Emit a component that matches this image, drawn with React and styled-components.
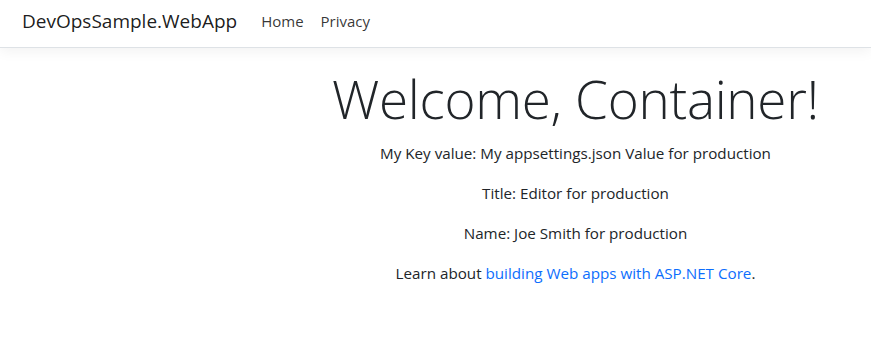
import React from "react";
import styled, { createGlobalStyle } from "styled-components";

const Global = createGlobalStyle`
  html, body { margin: 0; padding: 0; background: #fff; }
  body {
    font-family: "Open Sans", "Noto Sans", sans-serif;
    font-size: 15.2px;
    line-height: 24px;
    color: #212529;
  }
`;

const Navbar = styled.header`
  height: 48px;
  box-sizing: border-box;
  background: #fff;
  border-bottom: 1px solid #dee2e6;
  box-shadow: 0 4px 12px rgba(0, 0, 0, 0.05);
  display: flex;
  align-items: center;
  padding: 0 0 6px 22px;
`;

const Brand = styled.a`
  font-size: 19px;
  color: rgba(0, 0, 0, 0.9);
  text-decoration: none;
  margin-right: 24px;
`;

const NavList = styled.nav`
  display: flex;
  gap: 17px;
`;

const NavLink = styled.a`
  font-size: 15px;
  color: rgba(0, 0, 0, 0.8);
  text-decoration: none;
`;

const Main = styled.main`
  padding-left: 280px;
  text-align: center;
  padding-top: 19px;
`;

const Title = styled.h1`
  font-size: 53px;
  font-weight: 300;
  line-height: 1.2;
  margin: 0 0 10px;
  letter-spacing: -0.3px;
`;

const Para = styled.p`
  margin: 0 0 16px;
`;

const Link = styled.a`
  color: #0d6efd;
  text-decoration: none;
`;

export default function App() {
  return (
    <>
      <Global />
      <Navbar>
        <Brand href="#">DevOpsSample.WebApp</Brand>
        <NavList>
          <NavLink href="#">Home</NavLink>
          <NavLink href="#">Privacy</NavLink>
        </NavList>
      </Navbar>
      <Main>
        <Title>Welcome, Container!</Title>
        <Para>My Key value: My appsettings.json Value for production</Para>
        <Para>Title: Editor for production</Para>
        <Para>Name: Joe Smith for production</Para>
        <Para>
          Learn about <Link href="#">building Web apps with ASP.NET Core</Link>.
        </Para>
      </Main>
    </>
  );
}
